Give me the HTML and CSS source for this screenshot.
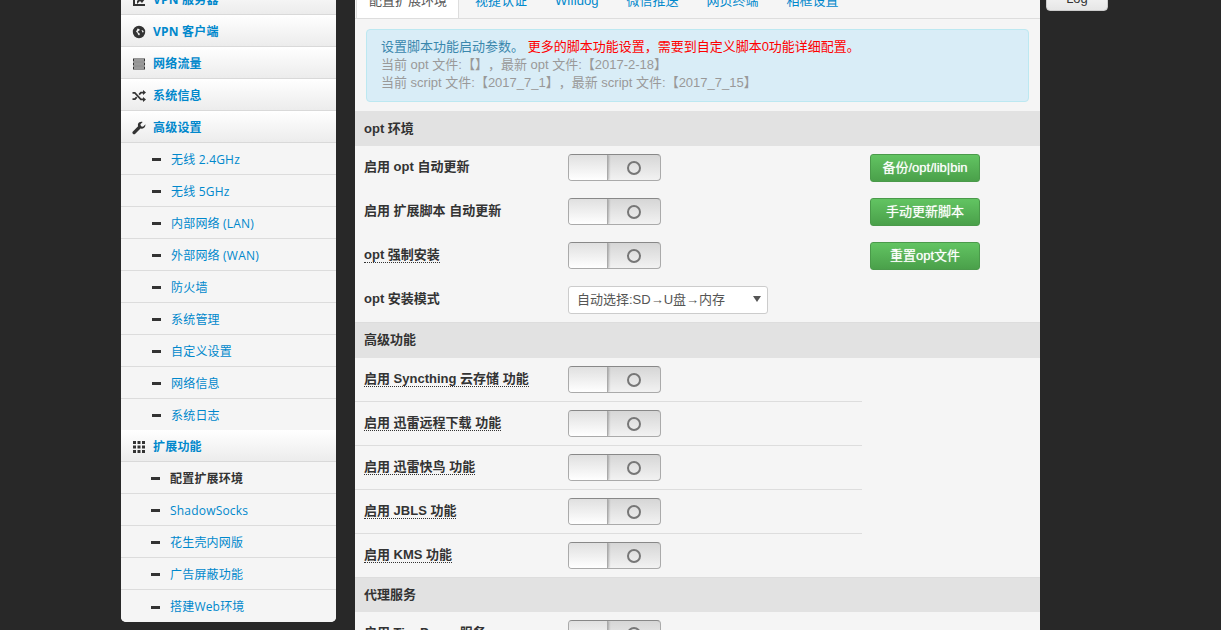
FILE: index.html
```html
<!DOCTYPE html>
<html lang="zh">
<head>
<meta charset="utf-8">
<title>配置扩展环境</title>
<link rel="stylesheet" href="styles.css">
</head>
<body>
<div class="viewport">
  <div class="page">
    <nav class="sidebar">
      <a class="item"><svg class="ico" viewBox="0 0 14 14"><path d="M1 1v12h12v-2H3V1zM5 8l3-3 2 2 3-4v3l-3 4-2-2-3 3z"/></svg>VPN 服务器</a>
      <a class="item"><svg class="ico" viewBox="0 0 14 14"><path fill-rule="evenodd" d="M7 .8a6.200 6.200 0 1 0 0 12.400A6.200 6.200 0 0 0 7 .8zM5.500 3.500l1.500.5 1 1-1.500 1-1 1 1.500 1 1 1-1 1.500-1-1-.5-1.500-1.500-1.500 1-1.500zM9.500 5l1.500.5.800 1.500-1.300.5z"/></svg>VPN 客户端</a>
      <a class="item"><svg class="ico" viewBox="0 0 14 14"><path d="M1 1.500h12v3H1zm0 4h12v3H1zm0 4h12v3H1z" fill="#333"/><path d="M2 2.600h10v.8H2zm0 4h10v.8H2zm0 4h10v.8H2z" fill="#fff"/></svg>网络流量</a>
      <a class="item"><svg class="ico" viewBox="0 0 14 14"><path d="M.5 3h2.700l6 6.500H11V8l3 2.500L11 13v-1.700H8.500L2.500 4.800H.5zM.5 9.300h2l1.600-1.800 1.300 1.300-2.100 2.300H.5zM6.500 5l2-2.300H11V1l3 2.500L11 6V4.500H9.300L7.800 6.200z"/></svg>系统信息</a>
      <a class="item"><svg class="ico" viewBox="0 0 14 14"><path d="M13.300 3.500 11 5.800 9 5.300 8.400 3.200 10.700.9C8.800.2 6.900.9 6.200 2.500c-.4 1-.4 1.900-.1 2.700L.9 10.400c-.7.700-.7 1.700 0 2.400s1.700.7 2.400 0l5.200-5.200c2.400.7 5.600-1.300 4.800-4.600z"/></svg>高级设置</a>
      <a class="item sub"><i class="dash"></i>无线 2.4GHz</a>
      <a class="item sub"><i class="dash"></i>无线 5GHz</a>
      <a class="item sub"><i class="dash"></i>内部网络 (LAN)</a>
      <a class="item sub"><i class="dash"></i>外部网络 (WAN)</a>
      <a class="item sub"><i class="dash"></i>防火墙</a>
      <a class="item sub"><i class="dash"></i>系统管理</a>
      <a class="item sub"><i class="dash"></i>自定义设置</a>
      <a class="item sub"><i class="dash"></i>网络信息</a>
      <a class="item sub end"><i class="dash"></i>系统日志</a>
      <a class="item"><svg class="ico" viewBox="0 0 14 14"><path d="M1 1h3v3H1zm4.500 0h3v3h-3zM10 1h3v3h-3zM1 5.500h3v3H1zm4.500 0h3v3h-3zm4.500 0h3v3h-3zM1 10h3v3H1zm4.500 0h3v3h-3zm4.500 0h3v3h-3z"/></svg>扩展功能</a>
      <a class="item sub low current"><i class="dash"></i>配置扩展环境</a>
      <a class="item sub low"><i class="dash"></i>ShadowSocks</a>
      <a class="item sub low"><i class="dash"></i>花生壳内网版</a>
      <a class="item sub low"><i class="dash"></i>广告屏蔽功能</a>
      <a class="item sub low last"><i class="dash"></i>搭建Web环境</a>
    </nav>

    <main class="main">
      <ul class="tabs">
        <li class="tab active">配置扩展环境</li>
        <li class="tab">视捷认证</li>
        <li class="tab">Wifidog</li>
        <li class="tab">微信推送</li>
        <li class="tab">网页终端</li>
        <li class="tab">相框设置</li>
      </ul>
      <div class="alert">
        <div>设置脚本功能启动参数。 <span class="red">更多的脚本功能设置，需要到自定义脚本0功能详细配置。</span></div>
        <div class="grey">当前 opt 文件:【】，最新 opt 文件:【2017-2-18】</div>
        <div class="grey">当前 script 文件:【2017_7_1】，最新 script 文件:【2017_7_15】</div>
      </div>

      <h4 class="section first">opt 环境</h4>
      <div class="row"><div class="label"><span>启用 opt 自动更新</span></div><div class="switch"><b></b><i></i></div><button class="btn">备份/opt/lib|bin</button></div>
      <div class="row"><div class="label"><span>启用 扩展脚本 自动更新</span></div><div class="switch"><b></b><i></i></div><button class="btn">手动更新脚本</button></div>
      <div class="row"><div class="label"><span class="tip">opt 强制安装</span></div><div class="switch"><b></b><i></i></div><button class="btn">重置opt文件</button></div>
      <div class="row"><div class="label"><span>opt 安装模式</span></div><div class="select">自动选择:SD→U盘→内存<em></em></div></div>

      <h4 class="section second">高级功能</h4>
      <div class="row line"><div class="label"><span class="tip">启用 Syncthing 云存储 功能</span></div><div class="switch"><b></b><i></i></div></div>
      <div class="row line"><div class="label"><span class="tip">启用 迅雷远程下载 功能</span></div><div class="switch"><b></b><i></i></div></div>
      <div class="row line"><div class="label"><span class="tip">启用 迅雷快鸟 功能</span></div><div class="switch"><b></b><i></i></div></div>
      <div class="row line"><div class="label"><span class="tip">启用 JBLS 功能</span></div><div class="switch"><b></b><i></i></div></div>
      <div class="row"><div class="label"><span class="tip">启用 KMS 功能</span></div><div class="switch"><b></b><i></i></div></div>

      <h4 class="section third">代理服务</h4>
      <div class="row"><div class="label"><span>启用 TinyProxy 服务</span></div><div class="switch"><b></b><i></i></div></div>
    </main>

    <div class="side-right"><button class="log">Log</button></div>
  </div>
</div>
</body>
</html>
```
FILE: styles.css
```css
* { box-sizing: border-box; }
html, body { margin: 0; height: 100%; }
body {
  background: #282828;
  color: #333;
  font: 13px/20px "Liberation Sans", "Noto Sans CJK SC", sans-serif;
  text-spacing-trim: space-all;
}
.viewport { height: 630px; overflow: hidden; }
.page {
  display: flex;
  align-items: flex-start;
  margin: -18px 0 0 121px;
}

.sidebar {
  flex: none;
  width: 215px;
  margin-top: 1px;
  background: #f5f5f5;
  border-radius: 0 0 5px 5px;
  overflow: hidden;
  margin-right: 19px;
  font-family: "Open Sans", "Noto Sans CJK SC", sans-serif;
  font-size: 12px;
  letter-spacing: .2px;
}
.item {
  display: flex;
  align-items: center;
  height: 32px;
  padding: 2px 10px 0 11px;
  color: #0088cc;
  font-weight: 700;
  background: linear-gradient(#fff, #ececec);
  border-bottom: 1px solid #d9d9d9;
}
.ico { width: 14px; height: 14px; margin-right: 7px; fill: #333; flex: none; }
.item.sub {
  padding-left: 31px;
  font-weight: 400;
  background: #f5f5f5;
  border-bottom: 1px solid #dcdcdc;
}
.item.sub.low { padding-left: 30px; }
.item.sub.end { height: 31px; border-bottom: 0; }
.item.sub.last { border-bottom: 0; }
.item.current { color: #333; font-weight: 700; }
.dash { width: 9px; height: 3px; background: #333; margin-right: 10px; flex: none; }

.main {
  flex: none;
  width: 685px;
  background: #f5f5f5;
  margin-right: 6px;
}
.tabs {
  display: flex;
  list-style: none;
  margin: 0;
  padding: 0 0 0 1px;
  height: 37px;
  border-bottom: 1px solid #ddd;
}
.tab {
  padding: 9px 14px 0;
  height: 36px;
  color: #0088cc;
}
.tab.active {
  background: #fff;
  color: #555;
  padding: 9px 11px 0 12px;
  margin-right: 2px;
  border-right: 1px solid #ddd;
  border-left: 1px solid #ddd;
}
.alert {
  margin: 10px 11px 9px;
  height: 73px;
  padding: 8px 14px;
  background: #d9edf7;
  border: 1px solid #bce8f1;
  border-radius: 4px;
  color: #3a87ad;
  line-height: 18px;
}
.red { color: #f00; }
.grey { color: #999; }

.section {
  margin: 0;
  height: 35px;
  padding: 7px 9px;
  background: #e2e2e2;
  font-size: 13px;
  font-weight: 700;
  color: #333;
}
.section.first { padding-top: 8px; }
.section.second { height: 36px; border-top: 1px solid #ddd; }
.section.third { margin-top: -1px; position: relative; border-top: 1px solid #ddd; }
.row {
  display: flex;
  align-items: center;
  height: 44px;
  padding: 0 0 1px 9px;
  position: relative;
}
.row.line::after {
  content: "";
  position: absolute;
  left: 0;
  bottom: 0;
  width: 507px;
  height: 1px;
  background: #ddd;
}
.label { width: 204px; padding-bottom: 2px; font-weight: 700; flex: none; }
.tip { border-bottom: 1px dotted #333; }

.switch {
  flex: none;
  display: flex;
  width: 93px;
  height: 27px;
  border: 1px solid #aaa;
  border-top-color: #888;
  border-radius: 4px;
  background: linear-gradient(#d6d6d6, #f2f2f2);
  overflow: hidden;
  position: relative;
}
.switch b {
  width: 39px;
  background: linear-gradient(#e0e0e0, #fff);
  border-right: 1px solid #aaa;
  box-shadow: 1px 0 2px rgba(0,0,0,.25);
}
.switch i {
  width: 14px;
  height: 14px;
  margin: 6px 0 0 19px;
  border: 2px solid #777;
  border-radius: 50%;
}

.btn {
  margin-left: 209px;
  width: 110px;
  height: 28px;
  padding: 0;
  background: linear-gradient(#62c462, #4aa04a);
  border: 1px solid #4a9a4a;
  border-radius: 3px;
  color: #fff;
  font: inherit;
  text-shadow: 0 0 1px rgba(255,255,255,.7);
}
.select {
  flex: none;
  width: 200px;
  height: 28px;
  padding: 3px 8px;
  background: #fff;
  border: 1px solid #ccc;
  border-radius: 3px;
  color: #555;
  position: relative;
}
.select em {
  position: absolute;
  right: 6px;
  top: 9px;
  border: 4px solid transparent;
  border-top: 6px solid #555;
  border-bottom: 0;
}

.side-right { flex: none; }
.log {
  display: block;
  width: 62px;
  height: 29px;
  padding: 5px 0 0;
  background: linear-gradient(#fff, #e6e6e6);
  border: 1px solid #ccc;
  border-radius: 4px;
  color: #333;
  font: inherit;
}
```
